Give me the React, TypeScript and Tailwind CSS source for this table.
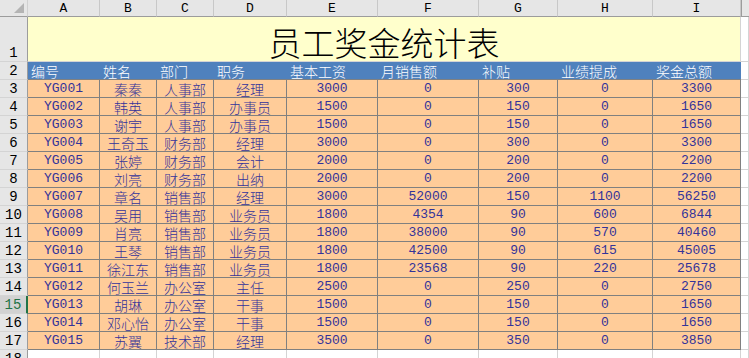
import React from 'react';

type Row = (string | number)[];

const cols = ['A', 'B', 'C', 'D', 'E', 'F', 'G', 'H', 'I'];
const heads = ['编号', '姓名', '部门', '职务', '基本工资', '月销售额', '补贴', '业绩提成', '奖金总额'];

const rows: Row[] = [
  ['YG001', '秦秦', '人事部', '经理', 3000, 0, 300, 0, 3300],
  ['YG002', '韩英', '人事部', '办事员', 1500, 0, 150, 0, 1650],
  ['YG003', '谢宇', '人事部', '办事员', 1500, 0, 150, 0, 1650],
  ['YG004', '王奇玉', '财务部', '经理', 3000, 0, 300, 0, 3300],
  ['YG005', '张婷', '财务部', '会计', 2000, 0, 200, 0, 2200],
  ['YG006', '刘亮', '财务部', '出纳', 2000, 0, 200, 0, 2200],
  ['YG007', '章名', '销售部', '经理', 3000, 52000, 150, 1100, 56250],
  ['YG008', '吴用', '销售部', '业务员', 1800, 4354, 90, 600, 6844],
  ['YG009', '肖亮', '销售部', '业务员', 1800, 38000, 90, 570, 40460],
  ['YG010', '王琴', '销售部', '业务员', 1800, 42500, 90, 615, 45005],
  ['YG011', '徐江东', '销售部', '业务员', 1800, 23568, 90, 220, 25678],
  ['YG012', '何玉兰', '办公室', '主任', 2500, 0, 250, 0, 2750],
  ['YG013', '胡琳', '办公室', '干事', 1500, 0, 150, 0, 1650],
  ['YG014', '邓心怡', '办公室', '干事', 1500, 0, 150, 0, 1650],
  ['YG015', '苏翼', '技术部', '经理', 3500, 0, 350, 0, 3850],
];

const mono = "font-['Liberation_Mono','Noto_Sans_CJK_SC',monospace]";
const cjk = "font-['Noto_Sans_CJK_SC',sans-serif]";

const RowHead: React.FC<{ n: number; h: string; active?: boolean }> = ({ n, h, active }) => (
  <div
    className={`${h} ${mono} flex items-end justify-center pb-[1px] text-[14px] leading-none border-b border-[#d4d4d4] ${
      active
        ? 'bg-[#d2d2d2] text-[#217346] border-r-2 border-r-[#217346]'
        : 'bg-[#e6e6e6] text-black border-r border-r-[#9c9c9c]'
    }`}
  >
    {n}
  </div>
);

const Blank: React.FC<{ h: string }> = ({ h }) => (
  <div className={`${h} bg-white border-r border-b border-[#d4d4d4]`} />
);

const App: React.FC = () => {
  return (
    <div className="w-[749px] h-[358px] overflow-hidden bg-white">
      <div className="grid grid-cols-[28px_72px_57px_57px_73px_91px_101px_79px_95px_88px_1fr]">
        {/* column letters */}
        <div className="h-[17px] bg-[#e6e6e6] border-r border-b border-r-[#d0d0d0] border-b-[#9c9c9c] relative">
          <div className="absolute right-[3px] bottom-[3px] w-0 h-0 border-l-[10px] border-l-transparent border-b-[10px] border-b-[#b4b4b4]" />
        </div>
        {cols.map((c) => (
          <div
            key={c}
            className={`h-[17px] bg-[#e6e6e6] border-r border-b border-r-[#c8c8c8] border-b-[#9c9c9c] flex items-center justify-center text-[13px] leading-none text-black ${mono}`}
          >
            {c}
          </div>
        ))}
        <div className="h-[17px] bg-[#e6e6e6] border-l border-b border-l-[#9c9c9c] border-b-[#9c9c9c]" />

        {/* title row */}
        <RowHead n={1} h="h-[45px]" />
        <div className={`col-span-9 h-[45px] bg-[#ffffcc] border-r border-b border-[#d4d4d4] flex items-end justify-center pb-[2px] text-[33px] leading-none font-light text-black ${cjk}`}>
          员工奖金统计表
        </div>
        <Blank h="h-[45px]" />

        {/* header row */}
        <RowHead n={2} h="h-[18px]" />
        {heads.map((t) => (
          <div
            key={t}
            className={`h-[18px] bg-[#4f81bd] border-b border-[#808080] flex items-end pl-[3px] pb-[1px] text-[14px] leading-none font-light text-white ${cjk}`}
          >
            {t}
          </div>
        ))}
        <Blank h="h-[18px]" />

        {/* data rows */}
        {rows.map((r, i) => (
          <React.Fragment key={i}>
            <RowHead n={i + 3} h="h-[18px]" active={i + 3 === 15} />
            {r.map((v, j) => {
              const isCjk = typeof v === 'string' && !/^[A-Z0-9]+$/.test(v);
              return (
                <div
                  key={j}
                  className={`h-[18px] bg-[#ffcc99] border-r border-b border-[#808080] flex items-end justify-center pb-[1px] leading-none text-[#333399] whitespace-nowrap ${
                    isCjk ? `${cjk} text-[14px] font-light` : `${mono} text-[13px] pb-[2px]`
                  }`}
                >
                  {v}
                </div>
              );
            })}
            <Blank h="h-[18px]" />
          </React.Fragment>
        ))}

        {/* row 18 */}
        <RowHead n={18} h="h-[18px]" />
        {cols.map((c) => (
          <Blank key={c} h="h-[18px]" />
        ))}
        <Blank h="h-[18px]" />
      </div>
    </div>
  );
};

export default App;
